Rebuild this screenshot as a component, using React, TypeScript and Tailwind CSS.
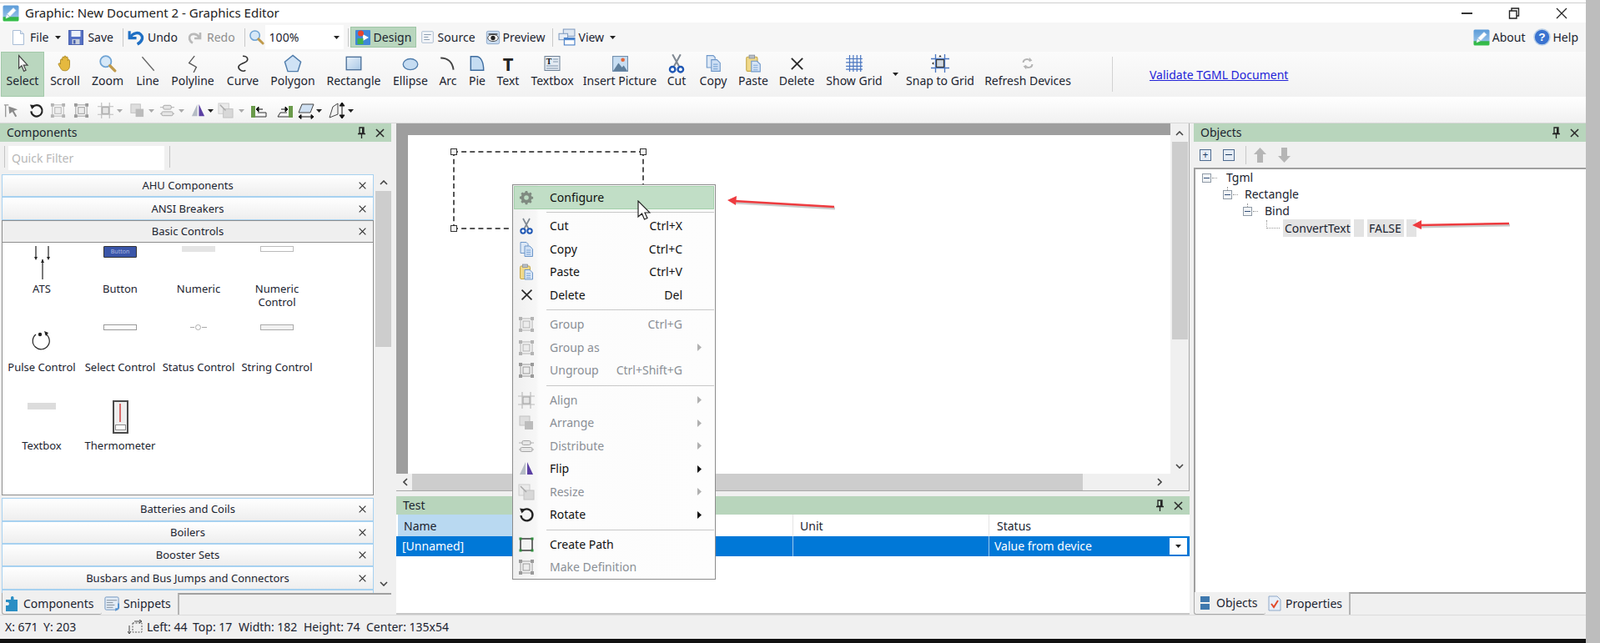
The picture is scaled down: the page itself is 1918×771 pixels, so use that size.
import type { ReactNode } from "react";

// ── Small icon helpers ─────────────────────────────────────────────

function Ico({ s = 20, children, className = "" }: { s?: number; children: ReactNode; className?: string }) {
  return (
    <svg width={s} height={s} viewBox="0 0 20 20" fill="none" className={`shrink-0 ${className}`}>
      {children}
    </svg>
  );
}

const AppIcon = ({ s = 20 }: { s?: number }) => (
  <Ico s={s}>
    <defs>
      <linearGradient id="appg" x1="0" y1="0" x2="0" y2="1">
        <stop offset="0" stopColor="#5b9bd8" />
        <stop offset="0.7" stopColor="#8fbde6" />
        <stop offset="0.75" stopColor="#35b44a" />
        <stop offset="1" stopColor="#35c04a" />
      </linearGradient>
    </defs>
    <rect x="0.5" y="0.5" width="19" height="19" rx="1.5" fill="url(#appg)" />
    <path d="M4 16l1.5-5L13 3.5l3 3L8.5 14z" fill="#fff" stroke="#dfeaf5" strokeWidth="0.6" />
    <path d="M5.5 11l3 3" stroke="#7aa5cf" strokeWidth="1" />
  </Ico>
);
const FileIco = () => (
  <Ico>
    <path d="M3.5 1.5h9l4 4v13h-13z" fill="#fff" stroke="#a9bdd6" />
    <path d="M12.5 1.5v4h4" fill="#dfe8f2" stroke="#a9bdd6" />
  </Ico>
);
const SaveIco = () => (
  <Ico>
    <rect x="1.5" y="1.5" width="17" height="17" fill="#5570c4" stroke="#4a62ae" />
    <rect x="4.5" y="2" width="11" height="7" fill="#eef2fa" />
    <rect x="5.5" y="12" width="9" height="6" fill="#c8cfdc" />
    <rect x="7" y="13" width="2.5" height="4.5" fill="#4a62ae" />
  </Ico>
);
const UndoIco = ({ c = "#1f6fc4" }: { c?: string }) => (
  <Ico s={21}>
    <path d="M3 3v8h8" fill="none" stroke={c} strokeWidth="3" />
    <path d="M4 10c3-5 9-6 12-3s2 8-4 11" fill="none" stroke={c} strokeWidth="3.2" />
  </Ico>
);
const RedoIco = () => (
  <Ico>
    <path d="M17 4v7h-7" fill="none" stroke="#b9b9b9" strokeWidth="2.6" />
    <path d="M16 10c-3-5-9-5-11-2.5s-1 7 3 9" fill="none" stroke="#b9b9b9" strokeWidth="2.8" />
  </Ico>
);
const GlassIco = ({ s = 20 }: { s?: number }) => (
  <Ico s={s}>
    <circle cx="8" cy="8" r="6" fill="#d6e8f8" stroke="#6ea3d4" strokeWidth="1.6" />
    <path d="M12.5 12.5l5.5 5.5" stroke="#c09a4c" strokeWidth="3" strokeLinecap="round" />
  </Ico>
);
const DesignIco = () => (
  <Ico>
    <rect x="1" y="1" width="18" height="18" rx="1" fill="#3f86d8" />
    <path d="M10 6l7 4-7 4z" fill="#fff" />
    <circle cx="7.5" cy="5" r="3.5" fill="#e8432e" />
    <rect x="3.5" y="11" width="7" height="7" fill="#41b34b" />
  </Ico>
);
const SourceIco = () => (
  <Ico s={17}>
    <rect x="2" y="2" width="16" height="16" rx="1" fill="#f4f6f9" stroke="#9fb3c9" />
    <path d="M5 6.5h10M5 10h6M5 13.5h8" stroke="#8a9cb0" strokeWidth="1.3" />
  </Ico>
);
const PreviewIco = () => (
  <Ico s={18}>
    <rect x="1.5" y="1.5" width="17" height="17" rx="2" fill="#c9dbef" stroke="#8aa6c8" />
    <ellipse cx="10" cy="10.5" rx="7" ry="4.5" fill="#fff" stroke="#333" />
    <circle cx="10" cy="10.5" r="3" fill="#222" />
    <path d="M4 5.5l12 0" stroke="#333" strokeWidth="1.5" />
  </Ico>
);
const ViewIco = () => (
  <Ico s={21}>
    <rect x="6" y="1" width="13" height="8" fill="#dfe7f1" stroke="#7f9bc0" />
    <rect x="1" y="6" width="10" height="7" fill="#e8eef6" stroke="#7f9bc0" />
    <rect x="7" y="11" width="12" height="8" fill="#fff" stroke="#3f78c4" />
    <rect x="7" y="11" width="12" height="2.5" fill="#4c86d0" />
  </Ico>
);
const HelpIco = () => (
  <svg width="21" height="21" viewBox="0 0 20 20" className="shrink-0">
    <circle cx="10" cy="10" r="9" fill="#3a73d0" stroke="#b8cfe8" strokeWidth="1.5" />
    <text x="10" y="14.5" textAnchor="middle" fontSize="13" fontWeight="700" fill="#fff" fontFamily="'Liberation Sans',sans-serif">?</text>
  </svg>
);
const PointerIco = () => (
  <Ico s={22}>
    <path d="M6 1.5v14l3-3 2.5 6 2.2-1-2.5-5.500h4.300z" fill="#f7f7f7" stroke="#444" strokeWidth="1.1" />
  </Ico>
);
const HandIco = () => (
  <Ico s={22}>
    <path d="M5 11V6.5c0-1.500 2-1.500 2 0V4c0-1.500 2-1.500 2 0V3c0-1.500 2-1.500 2 0v1c0-1.500 2-1.500 2 0v3c0-1.500 2-1.500 2 0v5c0 4-2 6-5 6s-4-1-5-3l-2-3.500c-.8-1.500 1-2.500 2-1z" fill="#e5b93f" stroke="#a88623" strokeWidth="0.8" />
  </Ico>
);
const LineIco = () => (
  <Ico s={22}>
    <path d="M4 3l13 15" stroke="#666" strokeWidth="1.2" />
  </Ico>
);
const PolylineIco = () => (
  <Ico s={22}>
    <path d="M12 2L6 9.500 14 14l-3 6" stroke="#555" strokeWidth="1.2" />
  </Ico>
);
const CurveIco = () => (
  <Ico s={22}>
    <path d="M10 2c6 0 7 5 2 7S3 13 7 17c2 2 5 1.500 6 .5" stroke="#333" strokeWidth="1.5" />
  </Ico>
);
const PolygonIco = () => (
  <Ico s={24}>
    <path d="M10 2l8 6.500-3 9.500H5L2 8.500z" fill="#cfe2f5" stroke="#4f7cab" strokeWidth="1.2" />
  </Ico>
);
const RectIco = () => (
  <Ico s={22}>
    <defs>
      <linearGradient id="rectg" x1="0" y1="0" x2="1" y2="1">
        <stop offset="0" stopColor="#e8f1fa" />
        <stop offset="1" stopColor="#a9c8e6" />
      </linearGradient>
    </defs>
    <rect x="2" y="3" width="16" height="14" fill="url(#rectg)" stroke="#4a6f98" strokeWidth="1.2" />
  </Ico>
);
const EllipseIco = () => (
  <Ico s={22}>
    <ellipse cx="10" cy="11" rx="8" ry="6" fill="#c5dcf2" stroke="#4f7cab" strokeWidth="1.2" />
  </Ico>
);
const ArcIco = () => (
  <Ico s={22}>
    <path d="M2 4c8 0 13 5 14 13" stroke="#444" strokeWidth="1.8" />
  </Ico>
);
const PieIco = () => (
  <Ico s={22}>
    <path d="M3 2.500h6c5 0 8 6 8 15H3z" fill="#c5dcf2" stroke="#3e6c9f" strokeWidth="1.3" />
  </Ico>
);
const TextboxIco = () => (
  <svg width="20" height="20" viewBox="0 0 20 20" className="shrink-0">
    <rect x="1" y="1.5" width="18" height="17" fill="#e4ebf3" stroke="#6f8196" />
    <text x="6" y="11" textAnchor="middle" fontSize="10" fontWeight="700" fill="#111" fontFamily="'Liberation Serif',serif">T</text>
    <path d="M11 5h6M11 8h6M3 13h14M3 16h14" stroke="#8096ad" />
  </svg>
);
const PictureIco = () => (
  <Ico s={21}>
    <rect x="1.5" y="1.5" width="17" height="17" fill="#c8def2" stroke="#6d8bab" />
    <circle cx="13" cy="5.5" r="2.2" fill="#e4683a" />
    <path d="M2 18l6-9 4 5 2-2 4 6z" fill="#5f7f9c" />
  </Ico>
);
const CutIco = ({ s = 24 }: { s?: number }) => (
  <Ico s={s}>
    <path d="M6 1l6.500 12M14 1L7.500 13" stroke="#7f8892" strokeWidth="1.7" />
    <circle cx="6" cy="16" r="2.7" fill="#fff" stroke="#1f57b4" strokeWidth="2" />
    <circle cx="14" cy="16" r="2.7" fill="#fff" stroke="#1f57b4" strokeWidth="2" />
  </Ico>
);
const CopyIco = ({ s = 22 }: { s?: number }) => (
  <Ico s={s}>
    <path d="M3 1.500h7l2 2v11H3z" fill="#dce8f6" stroke="#6e97c9" />
    <path d="M8 6h6l3.500 3.500v9H8z" fill="#cfe0f5" stroke="#6e97c9" />
    <path d="M10 11h5M10 13.500h5M10 16h5" stroke="#7ea7d6" />
  </Ico>
);
const PasteIco = ({ s = 22 }: { s?: number }) => (
  <Ico s={s}>
    <rect x="2.5" y="3" width="12" height="15.5" rx="1.5" fill="#f0d98a" stroke="#c5a84a" />
    <rect x="5.5" y="1" width="6" height="3.5" fill="#b9bfc7" stroke="#838b96" strokeWidth="0.7" />
    <path d="M8 7.500h6l3.500 3.500v8H8z" fill="#d7e5f6" stroke="#6e97c9" />
    <path d="M10 12h5M10 14.500h5M10 17h5" stroke="#7ea7d6" />
  </Ico>
);
const CrossIco = ({ s = 20, w = 2 }: { s?: number; w?: number }) => (
  <Ico s={s}>
    <path d="M3 3l14 14M17 3L3 17" stroke="#2b2b2b" strokeWidth={w} />
  </Ico>
);
const GridIco = () => (
  <Ico s={22}>
    <path d="M5 1v18M9 1v18M13 1v18M17 1v18M1 5h18M1 9h18M1 13h18M1 16.500h18" stroke="#4a76c0" strokeWidth="1.1" />
  </Ico>
);
const SnapIco = ({ s = 22, c = "#4a76c0", fill = "#cfd7e0" }: { s?: number; c?: string; fill?: string }) => (
  <Ico s={s}>
    <path d="M5 0v20M15 0v20M0 5h20M0 15h20" stroke={c} strokeWidth="1.2" />
    <rect x="6" y="6" width="8" height="8" fill={fill} stroke="#333" />
    <path d="M10 1l-1.500 2h3zM1 10l2-1.500v3z" fill="#222" />
  </Ico>
);
const RefreshIco = () => (
  <Ico s={18}>
    <path d="M4 9c0-4 5-6 9-3M16 11c0 4-5 6-9 3" stroke="#b5b5b5" strokeWidth="2.2" />
    <path d="M12 2l4 4-4 2zM8 18l-4-4 4-2z" fill="#b5b5b5" />
  </Ico>
);
const AlignTool = ({ s = 20 }: { s?: number }) => (
  <Ico s={s}>
    <path d="M5 0v20M15 0v20M0 5h20M0 15h20" stroke="#bcbcbc" strokeWidth="1.2" />
    <rect x="6" y="6" width="8" height="8" fill="#e6e6e6" stroke="#9d9d9d" />
  </Ico>
);
const ArrangeIco = ({ s = 20 }: { s?: number }) => (
  <Ico s={s}>
    <rect x="2" y="2" width="12" height="11" fill="#dedede" stroke="#c2c2c2" />
    <rect x="8" y="8" width="10" height="10" fill="#bcbcbc" />
  </Ico>
);
const DistributeIco = ({ s = 20 }: { s?: number }) => (
  <Ico s={s}>
    <path d="M1 6h18M1 14h18" stroke="#b0b0b0" />
    <rect x="5" y="3.500" width="10" height="5" rx="1.500" fill="#e6e6e6" stroke="#a5a5a5" />
    <rect x="3" y="11.500" width="14" height="5" rx="1.500" fill="#e6e6e6" stroke="#a5a5a5" />
  </Ico>
);
const FlipIco = ({ s = 20 }: { s?: number }) => (
  <Ico s={s}>
    <path d="M9 2v15H2z" fill="#b5bcc5" />
    <path d="M11 2v15h7z" fill="#5a3fa3" />
  </Ico>
);
const ResizeIco = ({ s = 20 }: { s?: number }) => (
  <Ico s={s}>
    <rect x="1" y="1" width="13" height="13" fill="#eaeaea" stroke="#cdcdcd" />
    <rect x="7" y="8" width="12" height="11" fill="#d8d8d8" stroke="#c2c2c2" />
    <path d="M3 3l7 7" stroke="#a9a9a9" strokeWidth="1.5" />
  </Ico>
);
const RotateIco = ({ s = 20 }: { s?: number }) => (
  <Ico s={s}>
    <path d="M5 6a7 7 0 1 1-1.500 5" stroke="#222" strokeWidth="2.3" />
    <path d="M2 2.500l7 1-4.500 5z" fill="#222" />
  </Ico>
);
const GroupIco = ({ s = 20, dark = false }: { s?: number; dark?: boolean }) => {
  const c = dark ? "#9a9a9a" : "#b3b3b3";
  return (
    <Ico s={s}>
      <path d="M3 3h14v14H3z" fill="none" stroke={c} />
      <rect x="6" y="6" width="8" height="8" fill="#ececec" stroke={c} />
      {[[1, 1], [15, 1], [1, 15], [15, 15]].map(([x, y]) => (
        <rect key={`${x}-${y}`} x={x} y={y} width="4" height="4" fill={c} />
      ))}
    </Ico>
  );
};
const GearIco = () => (
  <svg width="20" height="20" viewBox="0 0 20 20" className="shrink-0">
    <path d="M8.600 1h2.800l.5 2.200 1.700.7 1.900-1.200 2 2-1.200 1.900.7 1.700 2.200.5v2.800l-2.200.5-.7 1.700 1.200 1.900-2 2-1.900-1.200-1.700.7-.5 2.200H8.600l-.5-2.200-1.700-.7-1.900 1.200-2-2 1.200-1.900-.7-1.700L.8 11.400V8.600L3 8.100l.7-1.700-1.200-1.900 2-2 1.900 1.200 1.700-.7z" fill="#7f8a80" transform="translate(1.200 1.200) scale(.88)" />
    <circle cx="10" cy="10" r="2.800" fill="#bcdcc2" />
  </svg>
);
const PathIco = () => (
  <Ico>
    <rect x="3" y="3" width="14" height="14" fill="none" stroke="#222" strokeWidth="1.3" />
    {[[1.5, 1.5], [15.5, 1.5], [1.5, 15.5], [15.5, 15.5]].map(([x, y]) => (
      <rect key={`${x}-${y}`} x={x} y={y} width="3" height="3" fill="#2e8b3c" />
    ))}
  </Ico>
);
const Caret = ({ c = "#222", className = "" }: { c?: string; className?: string }) => (
  <svg width="7" height="4" viewBox="0 0 7 4" className={`shrink-0 ${className}`}>
    <path d="M0 0h7L3.500 4z" fill={c} />
  </svg>
);
const Pin = () => (
  <svg width="11" height="14" viewBox="0 0 11 14" className="shrink-0">
    <path d="M3 1h5v7H3zM1 8.500h9M5.500 9v5" stroke="#222" strokeWidth="1.3" fill="none" />
    <path d="M6 1.500h2v6.500H6z" fill="#222" />
  </svg>
);
const TreeBox = ({ tick = false }: { tick?: boolean }) => (
  <span className="relative flex h-[11px] w-[11px] shrink-0 items-center justify-center border border-[#8f9aa6] bg-[#f2f4f6]">
    <span className="h-px w-[7px] bg-[#33507a]" />
    {tick && <span className="absolute -top-[5px] left-1 h-1 border-l border-dotted border-[#999]" />}
  </span>
);

// ── Ribbon data ────────────────────────────────────────────────────

const RIBBON = [
  { label: "Scroll", w: "w-[50px]", icon: <HandIco /> },
  { label: "Zoom", w: "w-[52px]", icon: <GlassIco s={22} /> },
  { label: "Line", w: "w-[44px]", icon: <LineIco /> },
  { label: "Polyline", w: "w-[64px]", icon: <PolylineIco /> },
  { label: "Curve", w: "w-[56px]", icon: <CurveIco /> },
  { label: "Polygon", w: "w-[64px]", icon: <PolygonIco /> },
  { label: "Rectangle", w: "w-[82px]", icon: <RectIco /> },
  { label: "Ellipse", w: "w-[54px]", icon: <EllipseIco /> },
  { label: "Arc", w: "w-[36px]", icon: <ArcIco /> },
  { label: "Pie", w: "w-[34px]", icon: <PieIco /> },
  {
    label: "Text",
    w: "w-[40px]",
    icon: <span className="font-['Liberation_Serif',serif] text-[22px] leading-none font-bold text-[#222]">T</span>,
  },
  { label: "Textbox", w: "w-[66px]", icon: <TextboxIco /> },
  { label: "Insert Picture", w: "w-[96px]", icon: <PictureIco /> },
  { label: "Cut", w: "w-[40px]", icon: <CutIco /> },
  { label: "Copy", w: "w-[48px]", icon: <CopyIco /> },
  { label: "Paste", w: "w-[48px]", icon: <PasteIco /> },
  { label: "Delete", w: "w-[56px]", icon: <CrossIco s={19} /> },
  { label: "Show Grid", w: "w-[82px]", icon: <GridIco /> },
];

const ACCORDION_TOP = ["AHU Components", "ANSI Breakers"];
const ACCORDION_BOTTOM = ["Batteries and Coils", "Boilers", "Booster Sets", "Busbars and Bus Jumps and Connectors"];

const TinyBar = ({ className }: { className: string }) => <div className={className} />;

const COMPONENTS: { label: ReactNode; icon: ReactNode }[] = [
  {
    label: "ATS",
    icon: (
      <svg width="24" height="42" viewBox="0 0 24 42">
        <path d="M5 0v14M20 0v14M13 16v24" stroke="#222" strokeWidth="1.2" />
        <path d="M3 13l2 4 2-4zM18 13l2 4 2-4zM11 20l2-4 2 4z" fill="#222" />
      </svg>
    ),
  },
  {
    label: "Button",
    icon: (
      <div className="flex h-[14px] w-10 items-center justify-center rounded-[1px] border border-[#333] bg-[#3a55a8] text-[7px] text-[#aebbe0]">
        Button
      </div>
    ),
  },
  { label: "Numeric", icon: <TinyBar className="h-[7px] w-10 bg-[#e4e4e4]" /> },
  {
    label: (
      <>
        Numeric
        <br />
        Control
      </>
    ),
    icon: <TinyBar className="h-[7px] w-10 border border-[#bbb] bg-white" />,
  },
  {
    label: "Pulse Control",
    icon: (
      <svg width="26" height="26" viewBox="0 0 26 26" className="mt-2">
        <path d="M17 3a10 10 0 1 1-11 1" fill="none" stroke="#222" strokeWidth="1.2" />
        <circle cx="11" cy="4" r="2.2" fill="#222" />
        <path d="M16 0l5 2-3 4z" fill="#222" />
      </svg>
    ),
  },
  { label: "Select Control", icon: <TinyBar className="h-[7px] w-10 border border-[#999] bg-white" /> },
  {
    label: "Status Control",
    icon: (
      <svg width="20" height="7" viewBox="0 0 20 7">
        <path d="M0 3.500h5M14 3.500h6" stroke="#aaa" />
        <circle cx="9.5" cy="3.5" r="3" fill="#fff" stroke="#aaa" />
      </svg>
    ),
  },
  { label: "String Control", icon: <TinyBar className="h-[7px] w-10 border border-[#aaa] bg-[#f2f2f2]" /> },
  { label: "Textbox", icon: <TinyBar className="h-[8px] w-[34px] bg-[#dcdcdc]" /> },
  {
    label: "Thermometer",
    icon: (
      <div className="-mt-[3px] flex h-10 w-[19px] flex-col items-center justify-between border-2 border-[#4a4a4a] bg-[#eee] py-[2px]">
        <div className="h-[22px] w-[2px] bg-[#d96a6a]" />
        <div className="h-[7px] w-[13px] border border-[#888] bg-white" />
      </div>
    ),
  },
];

// ── Panels ─────────────────────────────────────────────────────────

function PanelHeader({ title }: { title: string }) {
  return (
    <div className="flex h-[22px] shrink-0 items-center bg-[#b8d5bc] pr-[7px] pl-2">
      <span className="flex-1">{title}</span>
      <Pin />
      <span className="ml-[10px]">
        <CrossIco s={13} w={2.4} />
      </span>
    </div>
  );
}

function AccordionRow({ title, active = false }: { title: string; active?: boolean }) {
  return (
    <div
      className={`relative flex h-[27.4px] shrink-0 items-center justify-center border text-[13px] ${
        active
          ? "border-[#8e8e8e] bg-[#efefef]"
          : "border-[#a7d1f0] bg-gradient-to-b from-white to-[#eeeeee]"
      }`}
    >
      {title}
      <span className="absolute right-[7px]">
        <CrossIco s={11} w={2} />
      </span>
    </div>
  );
}

function MenuRow({
  icon,
  label,
  shortcut,
  arrow,
  off = false,
  hot = false,
}: {
  icon?: ReactNode;
  label: string;
  shortcut?: string;
  arrow?: boolean;
  off?: boolean;
  hot?: boolean;
}) {
  return (
    <div
      className={`flex h-[27.5px] shrink-0 items-center ${off ? "text-[#8a8f96]" : "text-[#101010]"} ${
        hot ? "border border-[#a3d0aa] bg-[#c1dec6]" : "border border-transparent"
      }`}
    >
      <span className="flex w-[28px] justify-center">{icon}</span>
      <span className="ml-[14px] flex-1">{label}</span>
      {shortcut && <span className="mr-[37px]">{shortcut}</span>}
      {arrow && (
        <svg width="5" height="9" viewBox="0 0 5 9" className="mr-[14px]">
          <path d="M0 0l5 4.500L0 9z" fill={off ? "#b0b0b0" : "#111"} />
        </svg>
      )}
    </div>
  );
}

const MenuSep = () => (
  <div className="flex h-2 shrink-0 items-center pl-[39px]">
    <div className="h-px flex-1 bg-[#c8c8c8]" />
  </div>
);

function ContextMenu() {
  return (
    <div className="absolute top-[221px] left-[614px] z-20 flex h-[474px] w-[244px] flex-col border border-[#8c8c8c] bg-[linear-gradient(90deg,#efefef_0,#f7f7f7_28px,#fcfcfc_31px,#fdfdfd_100%)] p-px text-[14px]">
      <MenuRow hot icon={<GearIco />} label="Configure" />
      <div className="h-[7px] shrink-0 pt-[3px] pl-[39px]">
        <div className="h-px bg-[#c8c8c8]" />
      </div>
      <MenuRow icon={<CutIco s={20} />} label="Cut" shortcut="Ctrl+X" />
      <MenuRow icon={<CopyIco s={20} />} label="Copy" shortcut="Ctrl+C" />
      <MenuRow icon={<PasteIco s={20} />} label="Paste" shortcut="Ctrl+V" />
      <MenuRow icon={<CrossIco s={17} />} label="Delete" shortcut="Del" />
      <MenuSep />
      <MenuRow off icon={<GroupIco />} label="Group" shortcut="Ctrl+G" />
      <MenuRow off arrow icon={<GroupIco />} label="Group as" />
      <MenuRow off icon={<GroupIco dark />} label="Ungroup" shortcut="Ctrl+Shift+G" />
      <MenuSep />
      <MenuRow off arrow icon={<AlignTool />} label="Align" />
      <MenuRow off arrow icon={<ArrangeIco />} label="Arrange" />
      <MenuRow off arrow icon={<DistributeIco />} label="Distribute" />
      <MenuRow arrow icon={<FlipIco />} label="Flip" />
      <MenuRow off arrow icon={<ResizeIco />} label="Resize" />
      <MenuRow arrow icon={<RotateIco />} label="Rotate" />
      <MenuSep />
      <MenuRow icon={<PathIco />} label="Create Path" />
      <MenuRow off icon={<GroupIco dark />} label="Make Definition" />
    </div>
  );
}

// annotation arrows drawn on top of the shot
function RedArrow({ className, w, h, d, head }: { className: string; w: number; h: number; d: string; head: string }) {
  return (
    <svg width={w} height={h} viewBox={`0 0 ${w} ${h}`} className={`absolute z-30 ${className}`}>
      <path d={d} stroke="#8a8a8a" strokeOpacity="0.45" strokeWidth="3" transform="translate(1 2)" fill="none" />
      <path d={d} stroke="#ee3b3f" strokeWidth="2.4" fill="none" />
      <path d={head} fill="#ee3b3f" />
    </svg>
  );
}

function Handle({ className }: { className: string }) {
  return <span className={`absolute h-2 w-2 border border-[#333] bg-[#f2f2f2] ${className}`} />;
}

// ── Page ───────────────────────────────────────────────────────────

export default function App() {
  return (
    <div className="relative flex h-[771px] w-[1918px] overflow-hidden bg-[#f0f0f0] font-['Open_Sans',sans-serif] text-[14px] leading-none text-[#1c2430]">
      <div className="flex w-[1901px] flex-col">
        {/* Title bar */}
        <div className="flex h-[27px] shrink-0 flex-col bg-white">
          <div className="mt-[3px] h-px shrink-0 bg-[#cfcfcf]" />
          <div className="flex flex-1 items-center pr-[22px] pl-[3px]">
            <AppIcon s={20} />
            <span className="ml-[7px] flex-1 text-[15px] text-[#222]">Graphic: New Document 2 - Graphics Editor</span>
            <span className="h-[2px] w-[13px] bg-[#333]" />
            <svg width="14" height="14" viewBox="0 0 14 14" className="ml-[43px]">
              <path d="M1.500 4h8.500v9H1.500zM4 4V1h8.500v9H10" fill="none" stroke="#222" strokeWidth="1.4" />
            </svg>
            <svg width="14" height="14" viewBox="0 0 14 14" className="ml-[43px]">
              <path d="M1 1l12 12M13 1L1 13" stroke="#222" strokeWidth="1.2" />
            </svg>
          </div>
        </div>

        {/* Menu toolbar */}
        <div className="flex h-[35px] shrink-0 items-center bg-[#f6f6f6] pr-[9px] pl-3">
          <FileIco />
          <span className="ml-[4px]">File</span>
          <Caret className="ml-[8px]" />
          <span className="ml-[8px]">
            <SaveIco />
          </span>
          <span className="ml-[4px]">Save</span>
          <span className="mr-1 ml-[11px] h-[22px] w-px bg-[#c9c9c9]" />
          <UndoIco />
          <span className="ml-[4px]">Undo</span>
          <span className="ml-[10px]">
            <RedoIco />
          </span>
          <span className="ml-[5px] text-[#8f8f8f]">Redo</span>
          <span className="mr-1 ml-[11px] h-[22px] w-px bg-[#c9c9c9]" />
          <GlassIco s={19} />
          <div className="ml-[1px] flex h-[29px] w-[94px] items-center justify-between bg-white pr-[5px] pl-[5px]">
            100%
            <Caret />
          </div>
          <span className="ml-[5px] h-[22px] w-px bg-[#c9c9c9]" />
          <div className="ml-[2px] flex h-[25px] w-[79px] items-center border border-[#9fc6a6] bg-[#b9d6be] pl-[4px]">
            <DesignIco />
            <span className="ml-[3px]">Design</span>
          </div>
          <span className="ml-[5px]">
            <SourceIco />
          </span>
          <span className="ml-[4px]">Source</span>
          <span className="ml-[12px]">
            <PreviewIco />
          </span>
          <span className="ml-[3px]">Preview</span>
          <span className="mr-[6px] ml-[9px] h-[22px] w-px bg-[#c9c9c9]" />
          <ViewIco />
          <span className="ml-[3px]">View</span>
          <Caret className="ml-[7px]" />
          <span className="ml-auto">
            <AppIcon s={20} />
          </span>
          <span className="ml-[3px]">About</span>
          <span className="ml-[9px]">
            <HelpIco />
          </span>
          <span className="ml-[3px]">Help</span>
        </div>

        {/* Ribbon */}
        <div className="flex h-[54px] shrink-0 items-stretch bg-gradient-to-b from-[#fbfbfb] to-[#f2f2f2] pl-px">
          <div className="flex w-[52px] flex-col items-center border border-[#a3c9aa] bg-[#bad7bf] pt-[1px]">
            <span className="flex h-[24px] items-center">
              <PointerIco />
            </span>
            <span className="mt-[2px]">Select</span>
          </div>
          {RIBBON.map((item) => (
            <div key={item.label} className={`flex shrink-0 flex-col items-center pt-[2px] ${item.w}`}>
              <span className="flex h-[24px] items-center">{item.icon}</span>
              <span className="mt-[2px] whitespace-nowrap">{item.label}</span>
            </div>
          ))}
          <div className="flex w-4 shrink-0 justify-center pt-[25px]">
            <Caret />
          </div>
          <div className="flex w-[92px] shrink-0 flex-col items-center pt-[2px]">
            <span className="flex h-[24px] items-center">
              <SnapIco />
            </span>
            <span className="mt-[2px] whitespace-nowrap">Snap to Grid</span>
          </div>
          <div className="flex w-[118px] shrink-0 flex-col items-center pt-[2px]">
            <span className="flex h-[24px] items-center">
              <RefreshIco />
            </span>
            <span className="mt-[2px] whitespace-nowrap">Refresh Devices</span>
          </div>
          <span className="mt-[6px] ml-[42px] h-[42px] w-px bg-[#d2d2d2]" />
          <span className="mt-[21px] ml-[44px] text-[#2323d8] underline">Validate TGML Document</span>
        </div>

        {/* Transform toolbar */}
        <div className="flex h-[32px] shrink-0 items-center border-b border-[#d8d8d8] bg-gradient-to-b from-white to-[#f1f1f1] pt-[2px] pl-[4px]">
          <svg width="18" height="18" viewBox="0 0 20 20" className="shrink-0">
            <path d="M1 2h6M3 2v16" stroke="#999" strokeWidth="1.5" />
            <path d="M7 4l12 4-5 2 4 7-2 1-4-7-4 3z" fill="#8a8a8a" />
          </svg>
          <span className="ml-[11.5px]">
            <RotateIco s={19} />
          </span>
          <span className="ml-[7px]">
            <GroupIco s={19} />
          </span>
          <span className="ml-[9px]">
            <GroupIco s={19} dark />
          </span>
          <span className="ml-[10px]">
            <AlignTool s={19} />
          </span>
          <Caret c="#aaa" className="ml-[4px]" />
          <span className="ml-[8px]">
            <ArrangeIco s={19} />
          </span>
          <Caret c="#aaa" className="ml-[4px]" />
          <span className="ml-[6px]">
            <DistributeIco s={19} />
          </span>
          <Caret c="#aaa" className="ml-[4px]" />
          <span className="ml-[7px]">
            <FlipIco s={19} />
          </span>
          <Caret className="ml-[2px]" />
          <span className="ml-[5px]">
            <ResizeIco s={19} />
          </span>
          <Caret c="#aaa" className="ml-[6px]" />
          <svg width="20" height="18" viewBox="0 0 20 18" className="ml-[7.5px] shrink-0">
            <rect x="1" y="3" width="5" height="14" fill="#6a9a4a" />
            <path d="M6 16h13v-5H9" fill="#f4f4f4" stroke="#333" />
            <path d="M7 7h8M7 7l3-3v6z" stroke="#111" fill="#111" />
          </svg>
          <svg width="20" height="18" viewBox="0 0 20 18" className="ml-[12px] shrink-0">
            <rect x="14" y="3" width="5" height="14" fill="#6a9a4a" />
            <path d="M14 16H1l3-5h8" fill="#f4f4f4" stroke="#333" />
            <path d="M13 7H5M13 7l-3-3v6z" stroke="#111" fill="#111" />
          </svg>
          <svg width="22" height="22" viewBox="0 0 22 22" className="ml-[4px] shrink-0">
            <path d="M6 3h14l-4 10H2z" fill="#cfe0f2" stroke="#444" />
            <path d="M2 18h18M2 18l3-2.500v5zM20 18l-3-2.500v5z" stroke="#111" fill="#111" />
          </svg>
          <Caret className="ml-[0.5px]" />
          <svg width="24" height="22" viewBox="0 0 24 22" className="ml-[7.5px] shrink-0">
            <path d="M2 19L6 6l6-4v13z" fill="#f4f4f4" stroke="#444" />
            <path d="M17 1v19M17 1l-3 4h6zM17 20l-3-4h6z" stroke="#111" fill="#111" />
          </svg>
          <Caret />
        </div>

        {/* Workspace */}
        <div className="relative flex min-h-0 flex-1 gap-[6px]">
          {/* Components dock */}
          <div className="flex w-[469px] shrink-0 flex-col">
            <PanelHeader title="Components" />
            <div className="flex h-[39px] shrink-0 items-start pt-[5px] pl-[5px]">
              <span className="h-[26px] w-px bg-[#c4c4c4]" />
              <div className="ml-[4px] flex h-[29px] w-[187px] items-center bg-white pl-1 text-[#b8b8b8]">Quick Filter</div>
              <span className="ml-[6px] h-[26px] w-px bg-[#c4c4c4]" />
            </div>
            <div className="flex min-h-0 flex-1 pl-[2px]">
              <div className="flex w-[446px] shrink-0 flex-col overflow-hidden">
                {ACCORDION_TOP.map((t) => (
                  <AccordionRow key={t} title={t} />
                ))}
                <AccordionRow title="Basic Controls" active />
                <div className="grid h-[303px] shrink-0 grid-cols-[94px_94px_94px_94px] grid-rows-[94px_94px_94px] border border-t-0 border-[#8e8e8e] bg-white">
                  {COMPONENTS.map((c, i) => (
                    <div key={i} className="flex flex-col items-center pt-[4px] text-center leading-[16px]">
                      <div className="flex h-[42px] w-full justify-center">{c.icon}</div>
                      <div className="mt-[1px] text-[13px] whitespace-nowrap">{c.label}</div>
                    </div>
                  ))}
                </div>
                <div className="h-[3px] shrink-0" />
                {ACCORDION_BOTTOM.map((t) => (
                  <AccordionRow key={t} title={t} />
                ))}
                <div className="h-[6px] shrink-0 border-x border-t border-[#a7d1f0]" />
              </div>
              <div className="ml-[2px] flex w-[19px] shrink-0 flex-col items-center">
                <svg width="10" height="6" viewBox="0 0 10 6" className="mt-[7px] mb-[7px]">
                  <path d="M1 5l4-4 4 4" fill="none" stroke="#444" strokeWidth="1.6" />
                </svg>
                <div className="h-[187px] w-full bg-[#cdcdcd]" />
                <svg width="10" height="6" viewBox="0 0 10 6" className="mt-auto mb-2">
                  <path d="M1 1l4 4 4-4" fill="none" stroke="#444" strokeWidth="1.6" />
                </svg>
              </div>
            </div>
            <div className="flex h-[26px] shrink-0 items-stretch pl-[2px]">
              <div className="flex w-[120px] items-center rounded-b-[3px] border-b border-l border-[#a8a8a8] bg-[#f0f0f0] pl-[3px]">
                <svg width="15" height="19" viewBox="0 0 15 19" className="shrink-0">
                  <path d="M4 5h3V2.500a1.800 1.800 0 0 1 3.500 0V5H15v14H1V12h2a2 2 0 0 0 0-4H1V5z" fill="#2a8ec4" />
                </svg>
                <span className="ml-[7px]">Components</span>
              </div>
              <div className="flex w-[91px] items-center pl-[3px]">
                <svg width="19" height="19" viewBox="0 0 20 20" className="shrink-0">
                  <rect x="1" y="1" width="17" height="16" rx="1.5" fill="#e3ecf6" stroke="#6e93bf" />
                  <path d="M3 5h13M3 8h8M3 11h10M3 14h8" stroke="#7d8a98" />
                  <path d="M14 19l5-4v-6h-2v6h-3z" fill="#4e8fd0" />
                </svg>
                <span className="ml-[4px]">Snippets</span>
              </div>
              <div className="flex-1 border-t-2 border-l-[2px] border-t-[#a0a0a0] border-l-[#b5b5b5]" />
            </div>
          </div>

          {/* Canvas and Test dock */}
          <div className="flex w-[951px] shrink-0 flex-col gap-[6px]">
            <div className="flex h-[441px] shrink-0 flex-col border-r border-b border-[#a8a8a8]">
              <div className="flex min-h-0 flex-1">
                <div className="flex min-w-0 flex-1 flex-col">
                  <div className="h-[14px] shrink-0 bg-[#9e9e9e]" />
                  <div className="flex min-h-0 flex-1">
                    <div className="w-[14px] shrink-0 bg-[#9e9e9e]" />
                    <div className="relative flex-1 bg-white">
                      {/* selected rectangle */}
                      <div className="absolute top-[19px] left-[54px] h-[94px] w-[229px] border-2 border-dashed border-[#555]">
                        <Handle className="-top-[5px] -left-[5px]" />
                        <Handle className="-top-[5px] -right-[5px]" />
                        <Handle className="-bottom-[5px] -left-[5px]" />
                      </div>
                    </div>
                  </div>
                </div>
                <div className="flex w-[22px] shrink-0 flex-col items-center bg-[#f0f0f0]">
                  <svg width="10" height="6" viewBox="0 0 10 6" className="mt-[9px] mb-[7px]">
                    <path d="M1 5l4-4 4 4" fill="none" stroke="#444" strokeWidth="1.6" />
                  </svg>
                  <div className="h-[237px] w-[19px] bg-[#cdcdcd]" />
                  <svg width="10" height="6" viewBox="0 0 10 6" className="mt-auto mb-[6px]">
                    <path d="M1 1l4 4 4-4" fill="none" stroke="#444" strokeWidth="1.6" />
                  </svg>
                </div>
              </div>
              <div className="flex h-5 shrink-0 items-center bg-[#f0f0f0]">
                <svg width="6" height="10" viewBox="0 0 6 10" className="mr-[5px] ml-2">
                  <path d="M5 1L1 5l4 4" fill="none" stroke="#444" strokeWidth="1.6" />
                </svg>
                <div className="h-full w-[804px] bg-[#cdcdcd]" />
                <svg width="6" height="10" viewBox="0 0 6 10" className="ml-[89px]">
                  <path d="M1 1l4 4-4 4" fill="none" stroke="#444" strokeWidth="1.6" />
                </svg>
              </div>
            </div>
            <div className="flex min-h-0 flex-1 flex-col border-b-2 border-[#c8c8c8] bg-white">
              <PanelHeader title="Test" />
              <div className="flex h-[26px] shrink-0 items-stretch pl-[2px]">
                <div className="flex w-[243px] items-center bg-[#b9d9f1] pt-px pl-[7px]">Name</div>
                <div className="w-[231px] border-r border-[#e4e4e4]" />
                <div className="flex w-[235px] items-center border-r border-[#e4e4e4] pt-px pl-2">Unit</div>
                <div className="flex flex-1 items-center pt-px pl-[9px]">Status</div>
              </div>
              <div className="flex h-[24px] shrink-0 items-center bg-[#0078d7] pl-[2px] text-white">
                <div className="w-[474px] border-r border-[#9cc8ec] pl-[5px] leading-[24px]">[Unnamed]</div>
                <div className="h-full w-[235px] border-r border-[#9cc8ec]" />
                <div className="flex h-full flex-1 items-center pl-[6px]">
                  <span className="flex-1">Value from device</span>
                  <span className="mr-[3px] flex h-5 w-[21px] items-center justify-center bg-white">
                    <Caret />
                  </span>
                </div>
              </div>
            </div>
          </div>

          {/* Objects dock */}
          <div className="-ml-px flex min-w-0 flex-1 flex-col">
            <PanelHeader title="Objects" />
            <div className="flex h-[31px] shrink-0 items-center pl-[7px]">
              <span className="flex h-[14px] w-[14px] items-center justify-center border border-[#4f6b8f] bg-[#e4ebf4] text-[12px] text-[#1c3c66]">+</span>
              <span className="ml-[14px] flex h-[14px] w-[14px] items-center justify-center border border-[#4f6b8f] bg-[#e4ebf4]">
                <span className="h-px w-2 bg-[#1c3c66]" />
              </span>
              <span className="ml-[13px] h-[22px] w-px bg-[#c9c9c9]" />
              <svg width="15" height="18" viewBox="0 0 15 18" className="ml-[9px]">
                <path d="M7.500 0L15 8h-4v10H4V8H0z" fill="#b5b5b5" />
              </svg>
              <svg width="15" height="18" viewBox="0 0 15 18" className="ml-[14px]">
                <path d="M7.500 18L15 10h-4V0H4v10H0z" fill="#b5b5b5" />
              </svg>
            </div>
            <div className="min-h-0 flex-1 border-t-2 border-l-2 border-[#a0a0a0] bg-white">
              <div className="flex h-5 items-center pl-[8px]">
                <TreeBox />
                <span className="ml-px w-[6px] border-t border-dotted border-[#999]" />
                <span className="ml-[11px]">Tgml</span>
              </div>
              <div className="flex h-5 items-center pl-[33px]">
                <TreeBox tick />
                <span className="ml-px w-[6px] border-t border-dotted border-[#999]" />
                <span className="ml-[8px]">Rectangle</span>
              </div>
              <div className="flex h-5 items-center pl-[57px]">
                <TreeBox tick />
                <span className="ml-px w-[6px] border-t border-dotted border-[#999]" />
                <span className="ml-[8px]">Bind</span>
              </div>
              <div className="flex h-[21px] items-center pl-[85px]">
                <span className="h-[10px] w-[16px] -translate-y-[5px] border-b border-l border-dotted border-[#999]" />
                <span className="ml-[4px] flex h-full w-[81px] items-center bg-[#e3e3e3] pl-[2px]">ConvertText</span>
                <span className="ml-[4px] h-full w-[12px] bg-[#e3e3e3]" />
                <span className="ml-[4px] flex h-full w-[44px] items-center bg-[#e3e3e3] pl-[2px]">FALSE</span>
                <span className="ml-[3px] h-full w-[12px] bg-[#e3e3e3]" />
              </div>
            </div>
            <div className="flex h-[27px] shrink-0 items-stretch">
              <div className="flex w-[86px] items-center rounded-b-[3px] border-b border-l border-[#a8a8a8] pl-[7px]">
                <svg width="11" height="16" viewBox="0 0 11 16" className="shrink-0">
                  <rect width="11" height="7" fill="#3e78ae" />
                  <rect y="9" width="11" height="7" fill="#3e78ae" />
                </svg>
                <span className="ml-[8px]">Objects</span>
              </div>
              <div className="flex w-[100px] items-center pl-[3px]">
                <svg width="16" height="19" viewBox="0 0 16 19" className="shrink-0">
                  <path d="M1 1h10l4 4v13H1z" fill="#e8eff8" stroke="#8fa9c9" />
                  <path d="M4 10l3 4 5-8" fill="none" stroke="#e24a2a" strokeWidth="2" />
                </svg>
                <span className="ml-[5px]">Properties</span>
              </div>
              <div className="flex-1 border-t-2 border-l-2 border-t-[#a0a0a0] border-l-[#b5b5b5]" />
            </div>
          </div>
        </div>

        {/* Status bar */}
        <div className="flex h-[29px] shrink-0 items-center border-t border-[#dcdcdc] bg-[#f0f0f0] pl-[6px] text-[14px]">
          <span className="w-[46px]">X: 671</span>
          <span className="w-[101px]">Y: 203</span>
          <svg width="18" height="18" viewBox="0 0 18 18" className="shrink-0">
            <rect x="6" y="4" width="11" height="11" fill="none" stroke="#555" strokeDasharray="2 1.5" />
            <path d="M2 7v9M0 14l2 3 2-3M8 2h8M14 0l3 2-3 2" stroke="#444" fill="none" />
          </svg>
          <span className="ml-[5px] w-[55px]">Left: 44</span>
          <span className="w-[55px]">Top: 17</span>
          <span className="w-[78px]">Width: 182</span>
          <span className="w-[75px]">Height: 74</span>
          <span>Center: 135x54</span>
        </div>
        <div className="h-[5px] shrink-0 bg-[#111]" />
      </div>

      <div className="w-[17px] shrink-0 bg-[#bdbdbd]" />

      {/* Overlays */}
      <ContextMenu />
      <svg width="16" height="25" viewBox="0 0 16 25" className="absolute top-[240px] left-[764px] z-30">
        <path d="M1 1v19l4.500-4 3 7 3.500-1.500-3-6.500h6z" fill="#fff" stroke="#222" strokeWidth="1.2" />
      </svg>
      <RedArrow className="top-[234px] left-[870px]" w={132} h={18} d="M10 7L130 14" head="M2 6l11-5-1 11z" />
      <RedArrow className="top-[260px] left-[1691px]" w={120} h={18} d="M10 10L118 8" head="M2 10l11-6v11z" />
    </div>
  );
}
